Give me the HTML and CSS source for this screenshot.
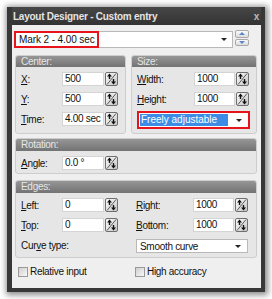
FILE: index.html
```html
<!DOCTYPE html>
<html lang="en">
<head>
    <meta charset="UTF-8">
    <meta name="viewport" content="width=device-width, initial-scale=1.0">
    <title>Layout Designer - Custom entry</title>
    <link rel="stylesheet" href="styles.css">
</head>

<body>
    <svg width="0" height="0" class="defs">
        <defs>
            <linearGradient id="spinfill" x1="0" y1="0" x2="1" y2="1">
                <stop offset="0" stop-color="#fdfdfd"/>
                <stop offset="1" stop-color="#c4c4c4"/>
            </linearGradient>
            <symbol id="spin" viewBox="0 0 13 14">
                <rect x="0.5" y="0.5" width="12" height="13" rx="1.5" fill="url(#spinfill)" stroke="#6f6f6f"/>
                <line x1="2" y1="12.5" x2="11" y2="1.5" stroke="#5a5a5a"/>
                <path d="M4.5 1.5 L2 4.5 H3.8 V7 H5.2 V4.5 H7 Z" fill="#111"/>
                <path d="M8.5 12.5 L6 9.5 H7.8 V7 H9.2 V9.5 H11 Z" fill="#111"/>
            </symbol>
        </defs>
    </svg>

    <div class="window">
        <div class="titlebar">
            <span class="title">Layout Designer - Custom entry</span>
            <span class="close">x</span>
        </div>

        <div class="content">
            <div class="entry-row">
                <div class="combo entry">
                    <span class="mark">Mark 2 - 4.00 sec</span>
                    <span class="arrow"></span>
                </div>
                <div class="updown">
                    <span class="step up"></span>
                    <span class="step down"></span>
                </div>
            </div>

            <div class="pair">
                <div class="group center">
                    <div class="group-head">Center:</div>
                    <div class="group-body">
                        <div class="field">
                            <label><u>X</u>:</label>
                            <span class="box">500</span>
                            <svg class="spin"><use href="#spin"/></svg>
                        </div>
                        <div class="field">
                            <label><u>Y</u>:</label>
                            <span class="box">500</span>
                            <svg class="spin"><use href="#spin"/></svg>
                        </div>
                        <div class="field">
                            <label><u>T</u>ime:</label>
                            <span class="box">4.00 sec</span>
                            <svg class="spin"><use href="#spin"/></svg>
                        </div>
                    </div>
                </div>

                <div class="group size">
                    <div class="group-head">Size:</div>
                    <div class="group-body">
                        <div class="field">
                            <label><u>W</u>idth:</label>
                            <span class="box">1000</span>
                            <svg class="spin"><use href="#spin"/></svg>
                        </div>
                        <div class="field">
                            <label><u>H</u>eight:</label>
                            <span class="box">1000</span>
                            <svg class="spin"><use href="#spin"/></svg>
                        </div>
                        <div class="combo mode">
                            <span class="selected">Freely adjustable</span>
                            <span class="arrow"></span>
                        </div>
                    </div>
                </div>
            </div>

            <div class="group rotation">
                <div class="group-head">Rotation:</div>
                <div class="group-body">
                    <div class="field">
                        <label><u>A</u>ngle:</label>
                        <span class="box">0.0 °</span>
                        <svg class="spin"><use href="#spin"/></svg>
                    </div>
                </div>
            </div>

            <div class="group edges">
                <div class="group-head">Edges:</div>
                <div class="group-body">
                    <div class="edge-grid">
                        <div class="field">
                            <label><u>L</u>eft:</label>
                            <span class="box">0</span>
                            <svg class="spin"><use href="#spin"/></svg>
                        </div>
                        <div class="field">
                            <label><u>R</u>ight:</label>
                            <span class="box">1000</span>
                            <svg class="spin"><use href="#spin"/></svg>
                        </div>
                        <div class="field">
                            <label><u>T</u>op:</label>
                            <span class="box">0</span>
                            <svg class="spin"><use href="#spin"/></svg>
                        </div>
                        <div class="field">
                            <label><u>B</u>ottom:</label>
                            <span class="box">1000</span>
                            <svg class="spin"><use href="#spin"/></svg>
                        </div>
                        <div class="field">
                            <label class="long">Cur<u>v</u>e type:</label>
                        </div>
                        <div class="combo curve">
                            <span>Smooth curve</span>
                            <span class="arrow"></span>
                        </div>
                    </div>
                </div>
            </div>

            <div class="checks">
                <span class="check"><span class="tick"></span>Relative input</span>
                <span class="check"><span class="tick"></span>High accuracy</span>
            </div>
        </div>
    </div>
</body>
</html>
```

FILE: styles.css
```css
*
{
    box-sizing: border-box;
}
body
{
    margin: 0;
    background: #fff;
    font-family: "Liberation Sans", Arial, sans-serif;
    font-size: 10px;
    letter-spacing: -0.3px;
    color: #111;
}
.defs
{
    position: absolute;
}
.window
{
    margin: 7px;
    width: 258px;
    height: 285px;
    padding: 0 4px 4px 5px;
    display: flex;
    flex-direction: column;
    background: #383838;
    box-shadow: 1px 1px 6px 2px rgba(0, 0, 0, 0.45);
}
.titlebar
{
    height: 18px;
    display: flex;
    justify-content: space-between;
    align-items: center;
    background: linear-gradient(#474747, #333);
}
.title
{
    color: #e4e4e4;
    font-weight: bold;
    letter-spacing: -0.25px;
    padding-left: 1px;
}
.close
{
    color: #bbb;
    font-weight: bold;
    padding-right: 2px;
}
.content
{
    flex: 1;
    background: #efefef;
    padding: 5px 4px 0 3px;
}
.entry-row
{
    display: flex;
    gap: 2px;
    height: 18px;
    margin-bottom: 7px;
}
.combo
{
    display: flex;
    align-items: center;
    justify-content: space-between;
    background: #fff;
    border: 1px solid #b9b9b9;
    padding: 0 6px 0 3px;
    white-space: nowrap;
}
.arrow
{
    width: 0;
    height: 0;
    border-left: 3px solid transparent;
    border-right: 3px solid transparent;
    border-top: 3px solid #222;
}
.entry
{
    width: 219px;
    height: 17px;
    margin: 1px 0 0 -1px;
    padding-left: 0;
    padding-right: 5px;
}
.mark
{
    align-self: stretch;
    margin: -1px 0 -1px -1px;
    border: 2px solid #e8141b;
    padding: 0 2px 0 3px;
    line-height: 13px;
    letter-spacing: -0.1px;
}
.updown
{
    width: 14px;
    height: 16px;
    display: flex;
    flex-direction: column;
    gap: 1px;
}
.step
{
    flex: 1;
    border: 1px solid #a9a9a9;
    border-radius: 2px;
    background: linear-gradient(#fbfbfb, #dcdcdc);
    display: flex;
    align-items: center;
    justify-content: center;
}
.step::after
{
    content: "";
    border-left: 3px solid transparent;
    border-right: 3px solid transparent;
}
.up::after
{
    border-bottom: 3px solid #5b86c8;
}
.down::after
{
    border-top: 3px solid #5b86c8;
}
.pair
{
    display: flex;
    gap: 5px;
}
.group
{
    border: 1px solid #cdcdcd;
    border-radius: 3px;
    background: #e6e6e6;
    overflow: hidden;
}
.group-head
{
    height: 12px;
    line-height: 12px;
    padding-left: 5px;
    color: #e6e6e6;
    background: linear-gradient(#969696, #737373);
}
.pair .group-head
{
    height: 11px;
    line-height: 11px;
}
.group-body
{
    padding: 5px 4px 4px 5px;
    display: flex;
    flex-direction: column;
    gap: 6px;
}
.center
{
    width: 111px;
}
.size
{
    width: 126px;
}
.field
{
    display: flex;
    align-items: center;
    height: 14px;
}
.field label
{
    width: 41px;
    flex-shrink: 0;
}
.size .field label,
.edge-grid .field:nth-child(2n) label
{
    width: 57px;
}
.box
{
    width: 42px;
    height: 14px;
    line-height: 12px;
    background: #fff;
    border: 1px solid #d4d4d4;
    padding-left: 2px;
    margin-right: 1px;
    white-space: nowrap;
    overflow: hidden;
}
.size .box,
.edge-grid .field:nth-child(2n) .box
{
    width: 41px;
}
.spin
{
    width: 13px;
    height: 14px;
}
.mode
{
    width: 113px;
    height: 18px;
    margin-top: -1px;
    border: 2px solid #e8141b;
    padding: 1px 6px 1px 1px;
}
.selected
{
    flex: 1;
    height: 100%;
    background: #3c8ce6;
    color: #fff;
    padding-left: 1px;
    line-height: 12px;
    letter-spacing: 0;
    margin-right: 8px;
}
.rotation
{
    margin-top: 4px;
}
.rotation .group-body
{
    padding-bottom: 3px;
}
.edges
{
    margin-top: 6px;
}
.edge-grid
{
    display: grid;
    grid-template-columns: 110px 120px;
    column-gap: 5px;
    row-gap: 6px;
}
.field .long
{
    width: auto;
}
.curve
{
    width: 112px;
    height: 14px;
    margin-top: 1px;
}
.checks
{
    display: flex;
    margin-top: 8px;
    padding-left: 3px;
}
.check
{
    width: 117px;
    display: flex;
    align-items: center;
    gap: 2px;
}
.tick
{
    width: 10px;
    height: 10px;
    border: 1px solid #999;
    background: linear-gradient(135deg, #cfcfcf, #f8f8f8);
}
```
